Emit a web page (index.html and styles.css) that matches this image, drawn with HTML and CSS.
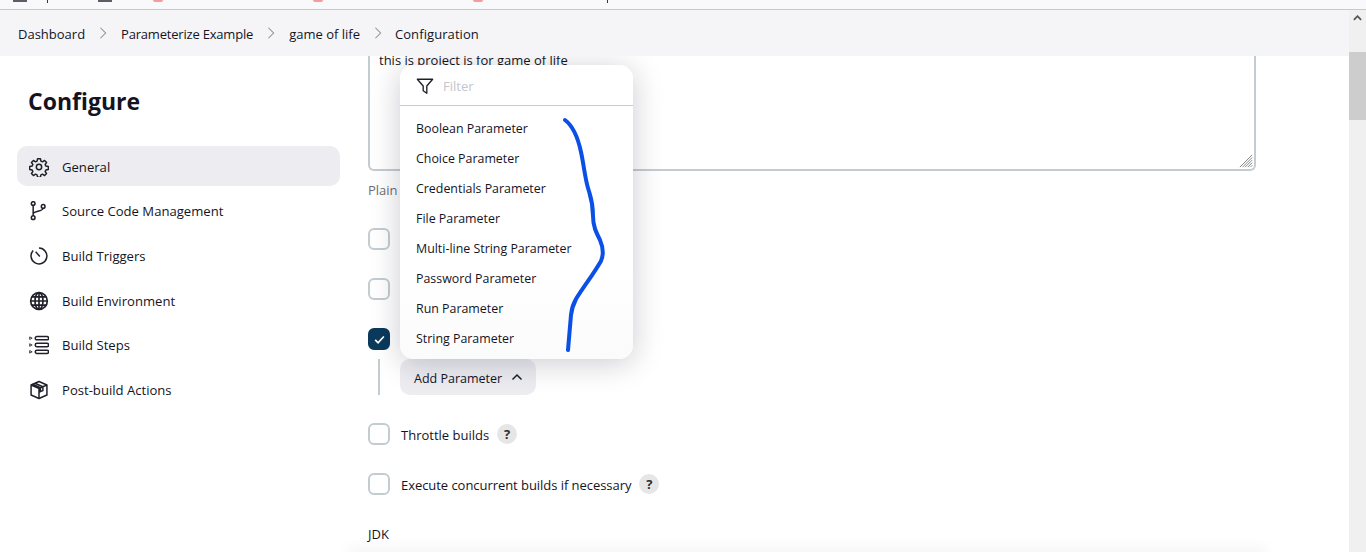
FILE: index.html
```html
<!DOCTYPE html>
<html lang="en">
<head>
<meta charset="UTF-8">
<meta name="viewport" content="width=device-width, initial-scale=1.0">
<title>game of life Config</title>
<link rel="stylesheet" href="styles.css">
</head>
<body>

<div class="topstrip">
    <span class="stub stub-a"></span>
    <span class="tick tick-a"></span>
    <span class="stub stub-b"></span>
    <span class="dot dot-a"></span>
    <span class="dot dot-b"></span>
    <span class="dot dot-c"></span>
    <span class="tick tick-b"></span>
</div>

<nav class="breadcrumbs">
    <a>Dashboard</a>
    <svg class="crumb-sep" viewBox="0 0 10 16"><path d="M2 2l6 6-6 6"/></svg>
    <a class="crumb-tight">Parameterize Example</a>
    <svg class="crumb-sep" viewBox="0 0 10 16"><path d="M2 2l6 6-6 6"/></svg>
    <a>game of life</a>
    <svg class="crumb-sep" viewBox="0 0 10 16"><path d="M2 2l6 6-6 6"/></svg>
    <a class="crumb-last">Configuration</a>
</nav>

<div class="page">
    <aside class="sidebar">
        <h1>Configure</h1>
        <ul class="side-list">
            <li class="side-item active">
                <svg class="side-icon" viewBox="0 0 24 24"><circle cx="12" cy="12" r="3.2"/><path d="M10.3 2h3.4l.6 3 1.900.8 2.500-1.700 2.400 2.400-1.700 2.500.8 1.900 3 .6v3.400l-3 .6-.8 1.900 1.700 2.500-2.400 2.400-2.500-1.700-1.900.8-.6 3h-3.400l-.6-3-1.900-.8-2.500 1.700-2.400-2.400 1.700-2.500-.8-1.900-3-.6v-3.400l3-.6.8-1.900-1.700-2.500 2.400-2.400 2.500 1.700 1.900-.8z" stroke-linejoin="round"/></svg>
                General
            </li>
            <li class="side-item">
                <svg class="side-icon" viewBox="0 0 24 24"><circle cx="5" cy="3" r="2.200"/><circle cx="5" cy="20" r="2.200"/><circle cx="17" cy="6.500" r="2.200"/><path d="M5 5.200v12.600M5 15.500c0-4 11.500-2.500 12-6.800"/></svg>
                Source Code Management
            </li>
            <li class="side-item">
                <svg class="side-icon" viewBox="0 0 24 24"><path d="M12 2.500a9.500 9.500 0 1 1-7 3"/><path d="M8 7l5 5.500"/></svg>
                Build Triggers
            </li>
            <li class="side-item">
                <svg class="side-icon globe" viewBox="0 0 24 24"><circle cx="12" cy="12" r="10"/><ellipse cx="12" cy="12" rx="4.800" ry="10"/><path d="M12 2v20M2 12h20M3.500 7h17M3.500 17h17"/></svg>
                Build Environment
            </li>
            <li class="side-item">
                <svg class="side-icon" viewBox="0 0 24 24"><rect x="7.500" y="1.800" width="16" height="4" rx="2"/><rect x="7.500" y="10" width="16" height="4" rx="2"/><rect x="7.500" y="18.200" width="16" height="4" rx="2"/><path class="step-mark" d="M.8 2.300l3 1.500-3 1.500zM.8 10.500l3 1.500-3 1.500zM.8 18.700l3 1.500-3 1.500z"/></svg>
                Build Steps
            </li>
            <li class="side-item">
                <svg class="side-icon" viewBox="0 0 24 24"><path d="M12 1.800l9.500 4.200v12l-9.500 4.200-9.500-4.200v-12z" stroke-linejoin="round"/><path d="M2.500 6l9.500 4.200 9.500-4.200M12 10.200v12M7.200 3.900l9.500 4.200v4.600l-3 1.300v-4.800l-9.500-4.200"/></svg>
                Post-build Actions
            </li>
        </ul>
    </aside>

    <main class="content">
        <div class="textarea-box">
            <div class="textarea-text">this is project is for game of life</div>
            <svg class="grip" viewBox="0 0 16 16"><path d="M15 1L1 15M15 4L4 15M15 7L7 15M15 10L10 15M15 13L13 15"/></svg>
        </div>
        <div class="plain-note">Plain text</div>

        <div class="option option-first"><span class="check"></span></div>
        <div class="option option-next"><span class="check"></span></div>
        <div class="option option-next">
            <span class="check checked">
                <svg viewBox="0 0 12 12"><path d="M2 6.300l2.700 2.700 5.300-5.800"/></svg>
            </span>
        </div>
        <div class="param-row">
            <span class="param-line"></span>
            <button class="add-param">Add Parameter
                <svg viewBox="0 0 12 8"><path d="M1.500 6.500L6 2l4.500 4.500"/></svg>
            </button>
        </div>

        <div class="option option-next">
            <span class="check"></span>
            <label>Throttle builds</label>
            <span class="help">?</span>
        </div>
        <div class="option option-next">
            <span class="check"></span>
            <label class="label-tight">Execute concurrent builds if necessary</label>
            <span class="help">?</span>
        </div>
        <div class="jdk-label">JDK</div>

        <div class="dropdown">
            <div class="filter-row">
                <svg viewBox="0 0 20 20"><path d="M1.500 2.500h17l-6.500 7.500v8l-4-2.800v-5.200z" stroke-linejoin="round"/></svg>
                <span>Filter</span>
            </div>
            <ul class="param-list">
                <li>Boolean Parameter</li>
                <li>Choice Parameter</li>
                <li>Credentials Parameter</li>
                <li>File Parameter</li>
                <li>Multi-line String Parameter</li>
                <li>Password Parameter</li>
                <li>Run Parameter</li>
                <li>String Parameter</li>
            </ul>
        </div>
    </main>

    <div class="scrollbar">
        <svg viewBox="0 0 10 6"><path d="M1 5l4-4 4 4"/></svg>
        <span class="thumb"></span>
    </div>
</div>

<div class="bottom-fade"></div>

<svg class="scribble" viewBox="0 0 1366 552"><path d="M565 120c8 6 13 18 16 32 3 14 4 26 7 36 3 10 5 14 5 28 0 10 3 16 7 24 3 7 4 14 1 21-8 14-17 25-25 38-3 6-4 8-5 16-1 12-2 24-3 35"/></svg>

</body>
</html>
```

FILE: styles.css
```css
* {
    box-sizing: border-box;
}
html, body {
    margin: 0;
    height: 552px;
    overflow: hidden;
}
body {
    font-family: "Open Sans", "Noto Sans", sans-serif;
    font-size: 13px;
    color: #14141f;
    background: #fff;
    position: relative;
}
.topstrip {
    height: 10px;
    background: #f9f9fb;
    border-bottom: 1px solid #c9c9cd;
    position: relative;
}
.topstrip span {
    position: absolute;
    top: 0;
}
.tick {
    width: 1px;
    height: 3px;
    background: #333;
}
.tick-a { left: 47px; }
.tick-b { left: 607px; }
.stub {
    width: 14px;
    height: 2px;
    background: #5d5d66;
}
.stub-a { left: 13px; }
.stub-b { left: 98px; }
.dot {
    width: 10px;
    height: 2px;
    border-radius: 0 0 5px 5px;
    background: #f79a9a;
}
.dot-a { left: 153px; }
.dot-b { left: 313px; }
.dot-c { left: 473px; }

.breadcrumbs {
    height: 46px;
    background: #f5f5f8;
    display: flex;
    align-items: center;
    padding: 2px 18px 0;
    font-size: 13px;
    position: relative;
    z-index: 1;
}
.crumb-tight {
    letter-spacing: -0.2px;
}
.crumb-last {
    margin-left: -1px;
    letter-spacing: 0.08px;
}
.crumb-sep {
    width: 10px;
    height: 14px;
    margin: -3px 13px 0 13px;
    fill: none;
    stroke: #8e8e96;
    stroke-width: 1.2;
}

.page {
    display: flex;
    height: 496px;
}
.sidebar {
    width: 368px;
    padding: 31px 28px 0 17px;
    flex-shrink: 0;
}
.sidebar h1 {
    font-size: 23px;
    font-weight: 700;
    margin: 0 0 31px 11px;
    line-height: 28px;
}
.side-list {
    list-style: none;
    margin: 0;
    padding: 0;
}
.side-item {
    height: 40px;
    margin-bottom: 4.700px;
    padding: 1px 0 0 12px;
    display: flex;
    align-items: center;
    gap: 13px;
    border-radius: 10px;
    font-size: 13.1px;
}
.side-item.active {
    background: #ececf1;
    font-weight: 500;
}
.side-icon {
    width: 20px;
    height: 20px;
    fill: none;
    stroke: #20202a;
    stroke-width: 1.800;
}
.globe {
    stroke-width: 2;
}
.step-mark {
    stroke-width: 1;
}

.content {
    position: relative;
    flex: 1;
    min-width: 0;
}
.textarea-box {
    display: flow-root;
    width: 888px;
    height: 115px;
    border: 2px solid #c3ccd1;
    border-top: none;
    border-radius: 0 0 6px 6px;
    padding-left: 9px;
    position: relative;
}
.textarea-text {
    line-height: 18px;
    margin-top: -5px;
}
.grip {
    position: absolute;
    right: 1px;
    bottom: 1px;
    width: 14px;
    height: 14px;
    fill: none;
    stroke: #777;
    stroke-width: 1;
}
.plain-note {
    color: #6d6d78;
    margin-top: 10px;
    line-height: 18px;
}
.option {
    display: flex;
    align-items: center;
    height: 22px;
    gap: 11px;
}
.option label {
    padding-top: 2px;
}
.label-tight {
    letter-spacing: -0.05px;
}
.option-first { margin-top: 29px; }
.option-next { margin-top: 28px; }
.check {
    width: 22px;
    height: 22px;
    border: 2px solid #c3ccd1;
    border-radius: 6px;
    background: #fff;
    flex-shrink: 0;
}
.check.checked {
    background: #0b3a5c;
    border-color: #0b3a5c;
    display: flex;
    align-items: center;
    justify-content: center;
}
.check.checked svg {
    width: 13px;
    height: 13px;
    fill: none;
    stroke: #fff;
    stroke-width: 1.600;
}
.param-row {
    display: flex;
    margin-top: 9px;
}
.param-line {
    width: 2px;
    height: 36px;
    background: #c3ccd1;
    margin-left: 10px;
    margin-right: 20px;
}
.add-param {
    width: 136px;
    height: 36px;
    border: none;
    background: #ececf1;
    border-radius: 10px;
    font: inherit;
    font-size: 12.5px;
    color: inherit;
    display: flex;
    align-items: center;
    gap: 9px;
    padding: 2px 0 0 14px;
}
.add-param svg {
    width: 12px;
    height: 8px;
    margin-top: -2px;
    fill: none;
    stroke: #20202a;
    stroke-width: 1.500;
}
.help {
    width: 20px;
    height: 20px;
    border-radius: 50%;
    background: #e6e6e6;
    color: #2b2b33;
    font-size: 13px;
    font-weight: 700;
    display: flex;
    align-items: center;
    justify-content: center;
    margin-left: -3px;
}
.jdk-label {
    margin-top: 30px;
    line-height: 18px;
}

.dropdown {
    position: absolute;
    left: 32px;
    top: 9px;
    width: 233px;
    height: 294px;
    background: linear-gradient(#fff 70%, #fbfbfc);
    border-radius: 14px;
    box-shadow: 0 4px 30px rgba(20, 20, 40, 0.22);
}
.filter-row {
    height: 41px;
    border-bottom: 1px solid #c3ccd1;
    display: flex;
    align-items: center;
    padding: 1px 0 0 16px;
    gap: 9px;
    color: #c5c5cc;
}
.filter-row svg {
    width: 18px;
    height: 18px;
    fill: none;
    stroke: #20202a;
    stroke-width: 1.500;
}
.param-list {
    list-style: none;
    margin: 8px 0 0;
    padding: 0;
}
.param-list li {
    height: 30px;
    line-height: 30px;
    padding-left: 16px;
    font-size: 12.4px;
}
.scrollbar {
    position: absolute;
    top: 10px;
    right: 0;
    width: 17px;
    height: 542px;
    background: #f0f0f0;
    z-index: 2;
}
.scrollbar svg {
    display: block;
    width: 9px;
    height: 6px;
    margin: 5px auto 0;
    fill: none;
    stroke: #555;
    stroke-width: 2;
}
.thumb {
    position: absolute;
    top: 42px;
    left: 0;
    width: 17px;
    height: 68px;
    background: #cdcdcd;
}
/* soft shadow of the bar that sits just below the fold */
.bottom-fade {
    position: absolute;
    left: 352px;
    right: 104px;
    bottom: -4px;
    height: 4px;
    box-shadow: 0 0 14px 4px rgba(0, 0, 0, 0.05);
}
.scribble {
    position: absolute;
    left: 0;
    top: 0;
    width: 1366px;
    height: 552px;
    pointer-events: none;
    fill: none;
    stroke: #0a50e6;
    stroke-width: 4;
    stroke-linecap: round;
}
```
